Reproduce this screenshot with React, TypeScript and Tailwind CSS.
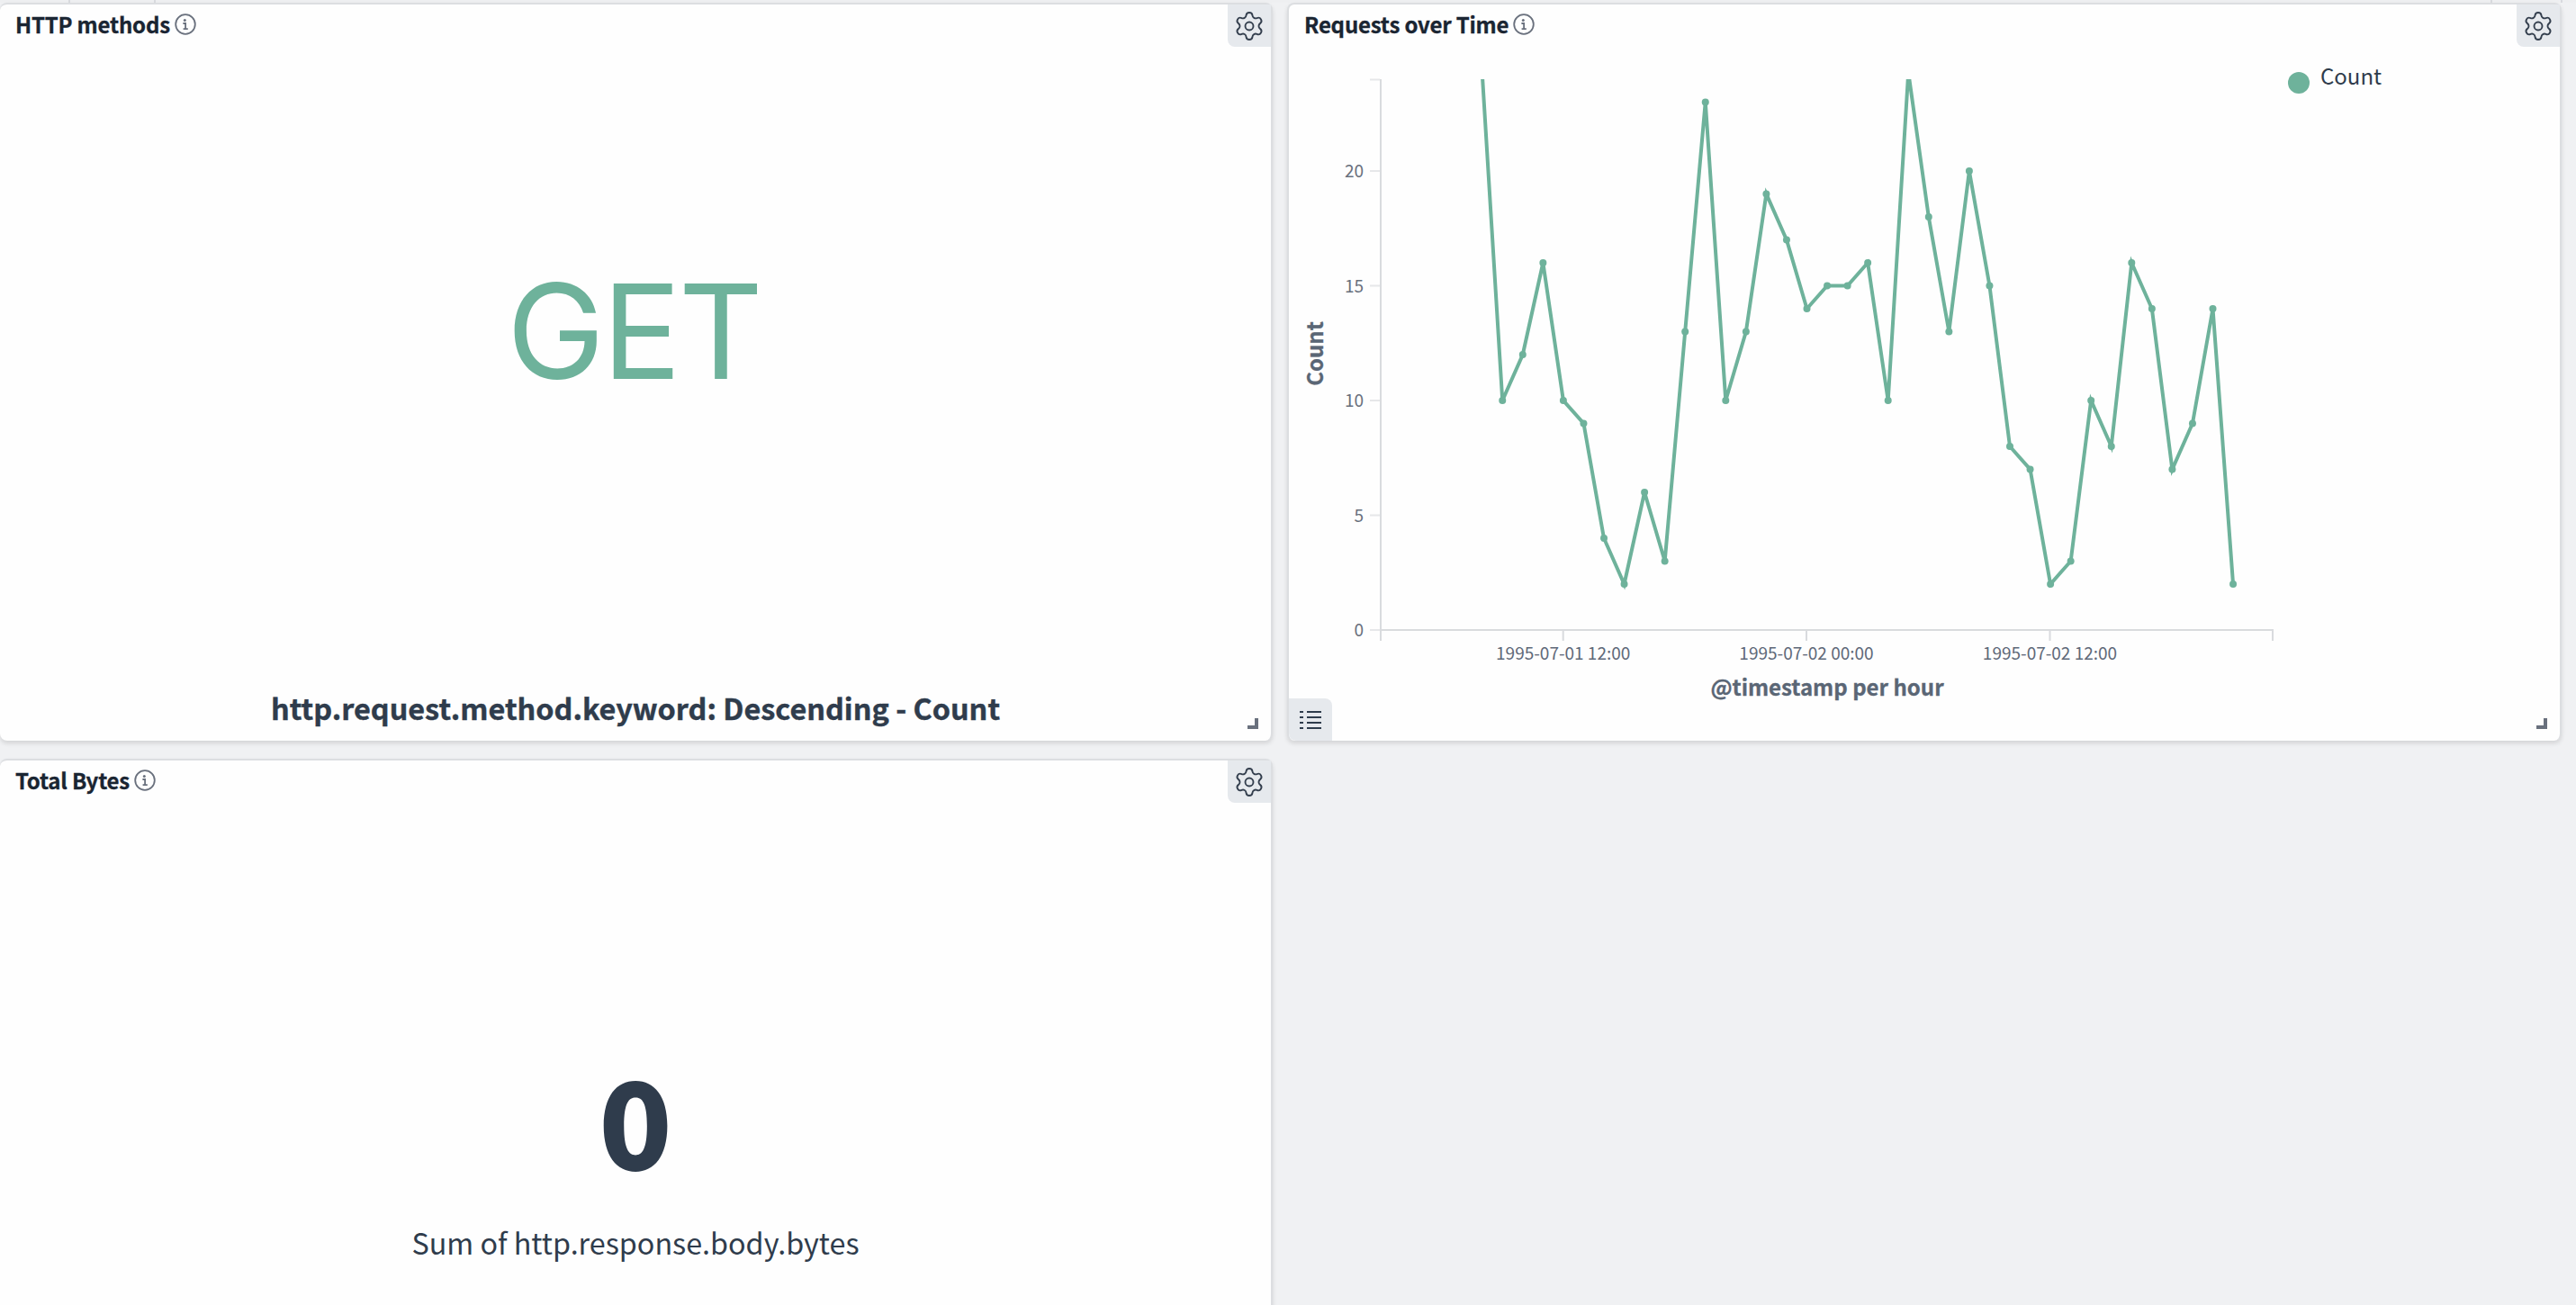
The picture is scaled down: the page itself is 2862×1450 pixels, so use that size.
import { Settings } from "lucide-react";

const data = [24.3,10,12,16,10,9,4,2,6,3,13,23,10,13,19,17,14,15,15,16,10,24.3,18,13,20,15,8,7,2,3,10,8,16,14,7,9,14,2];
const px = (i: number) => 1646.7 + i * 22.55;
const py = (v: number) => 700 - v * 25.5;
const points = data.map((v, i) => `${px(i)},${py(v)}`).join(" ");

function InfoIcon() {
  return (
    <svg width="24" height="24" viewBox="0 0 24 24" fill="none" className="shrink-0">
      <circle cx="12" cy="12" r="10.8" stroke="#69707d" strokeWidth="1.8" />
      <circle cx="11.3" cy="7.4" r="1.5" fill="#69707d" />
      <path d="M9.4 11h2.7v6.2M9.6 17.2h5.2" stroke="#69707d" strokeWidth="1.8" />
    </svg>
  );
}

function GearButton() {
  return (
    <div className="flex h-[47px] w-[48px] shrink-0 items-center justify-center rounded-bl-[8px] bg-[#e6e9ed]">
      <Settings size={36} strokeWidth={1.25} color="#343f4e" />
    </div>
  );
}

function Header({ title }: { title: string }) {
  return (
    <div className="flex h-[47px] shrink-0 items-start justify-between">
      <div className="flex items-center gap-[5px] pl-[17px] pt-[7px]">
        <span className="text-[24px] leading-[30px] font-bold tracking-[-0.2px] text-[#1a2532] [-webkit-text-stroke:0.3px_#1a2532]">{title}</span>
        <InfoIcon />
      </div>
      <GearButton />
    </div>
  );
}

function Handle() {
  return (
    <div className="absolute right-[14px] bottom-[13px] h-[12px] w-[12px] border-r-[4px] border-b-[4px] border-[#69707d]" />
  );
}

const panel =
  "relative flex flex-col rounded-[8px] border-x-2 border-t-2 border-[#dcdee1] bg-[#fefefe] shadow-[0_3px_5px_rgba(0,0,0,0.12)]";

function Chart() {
  return (
    <svg width="1412" height="771" viewBox="1432 52 1412 771" className="block">
      <defs>
        <clipPath id="plot">
          <rect x="1534" y="88" width="1000" height="620" />
        </clipPath>
      </defs>
      <g stroke="#e6e7e9" strokeWidth="2">
        {[0, 5, 10, 15, 20, 23.98].map((v) => (
          <line key={v} x1="1522" x2="1533" y1={py(v)} y2={py(v)} />
        ))}
      </g>
      <line x1="1534" x2="1534" y1="88" y2="712" stroke="#d9dbde" strokeWidth="2" />
      <line x1="1534" x2="2526" y1="700" y2="700" stroke="#d9dbde" strokeWidth="2" />
      <g stroke="#d9dbde" strokeWidth="2">
        {[1736.7, 2007, 2277.5, 2525].map((x) => (
          <line key={x} x1={x} x2={x} y1="700" y2="712" />
        ))}
      </g>
      <g fill="#69707d" fontSize="19" textAnchor="end">
        {[0, 5, 10, 15, 20].map((v) => (
          <text key={v} x="1515" y={py(v) + 7}>{v}</text>
        ))}
      </g>
      <g fill="#5f6979" fontSize="19" textAnchor="middle">
        <text x="1736.7" y="733">1995-07-01 12:00</text>
        <text x="2007" y="733">1995-07-02 00:00</text>
        <text x="2277.5" y="733">1995-07-02 12:00</text>
      </g>
      <text x="2030" y="773" fontSize="24" fontWeight="700" fill="#5a6675" stroke="#5a6675" strokeWidth="0.3" textAnchor="middle">@timestamp per hour</text>
      <text transform="translate(1470 393) rotate(-90)" fontSize="24" fontWeight="700" fill="#5a6675" stroke="#5a6675" strokeWidth="0.3" textAnchor="middle">Count</text>
      <g clipPath="url(#plot)">
        <polyline points={points} fill="none" stroke="#6eb29b" strokeWidth="4" strokeLinejoin="miter" />
        {data.map((v, i) => (
          <circle key={i} cx={px(i)} cy={py(v)} r="4" fill="#6eb29b" />
        ))}
      </g>
      <circle cx="2554" cy="92" r="12" fill="#6eb29b" />
      <text x="2578" y="94" fontSize="24" fill="#2f3c4c">Count</text>
    </svg>
  );
}

export default function App() {
  return (
    <div className="h-[1450px] w-[2862px] overflow-hidden bg-[#f0f1f3] font-['Noto_Sans_CJK_JP','Noto_Sans',sans-serif]">
      <div className="flex h-[3px] bg-[#eeeff1] pl-[76px]">
        <div className="w-[97px] border-x-2 border-[#d8dade]" />
        <div className="flex-1" />
        <div className="mr-[15px] w-[80px] border-x-2 border-[#d8dade]" />
      </div>
      <div className="grid grid-cols-[1414px_1416px] grid-rows-[820px_700px] gap-x-[16px] gap-y-[20px]">
        <section className={panel + " border-l-0"}>
          <Header title="HTTP methods" />
          <div className="flex flex-1 flex-col items-center">
            <div className="mt-[228px] pr-[4px] font-['Inter',sans-serif] text-[146px] leading-[176px] tracking-[-3px] text-[#6eb29b]">GET</div>
            <div className="mt-auto mb-[14px] text-[32.4px] leading-[46px] font-bold text-[#2f3c4c] [-webkit-text-stroke:0.4px_#2f3c4c]">
              http.request.method.keyword: Descending - Count
            </div>
          </div>
          <Handle />
        </section>
        <section className={panel}>
          <Header title="Requests over Time" />
          <Chart />
          <div className="absolute bottom-0 left-0 flex h-[47px] w-[48px] items-center justify-center rounded-tr-[8px] rounded-bl-[8px] bg-[#e6e9ed]">
            <svg width="24" height="20" viewBox="0 0 24 20" fill="#2f3c4c">
              <rect x="0" y="0" width="4" height="2" />
              <rect x="8" y="0" width="16" height="2" />
              <rect x="0" y="6" width="4" height="2" />
              <rect x="8" y="6" width="16" height="2" />
              <rect x="0" y="12" width="4" height="2" />
              <rect x="8" y="12" width="16" height="2" />
              <rect x="0" y="18" width="4" height="2" />
              <rect x="8" y="18" width="16" height="2" />
            </svg>
          </div>
          <Handle />
        </section>
        <section className={panel + " border-l-0"}>
          <Header title="Total Bytes" />
          <div className="flex flex-1 flex-col items-center">
            <div className="mt-[265px] text-[134px] leading-[170px] font-black text-[#2f3c4c]">0</div>
            <div className="mt-[30px] text-[32.3px] leading-[46px] text-[#2f3c4c]">Sum of http.response.body.bytes</div>
          </div>
        </section>
      </div>
    </div>
  );
}
